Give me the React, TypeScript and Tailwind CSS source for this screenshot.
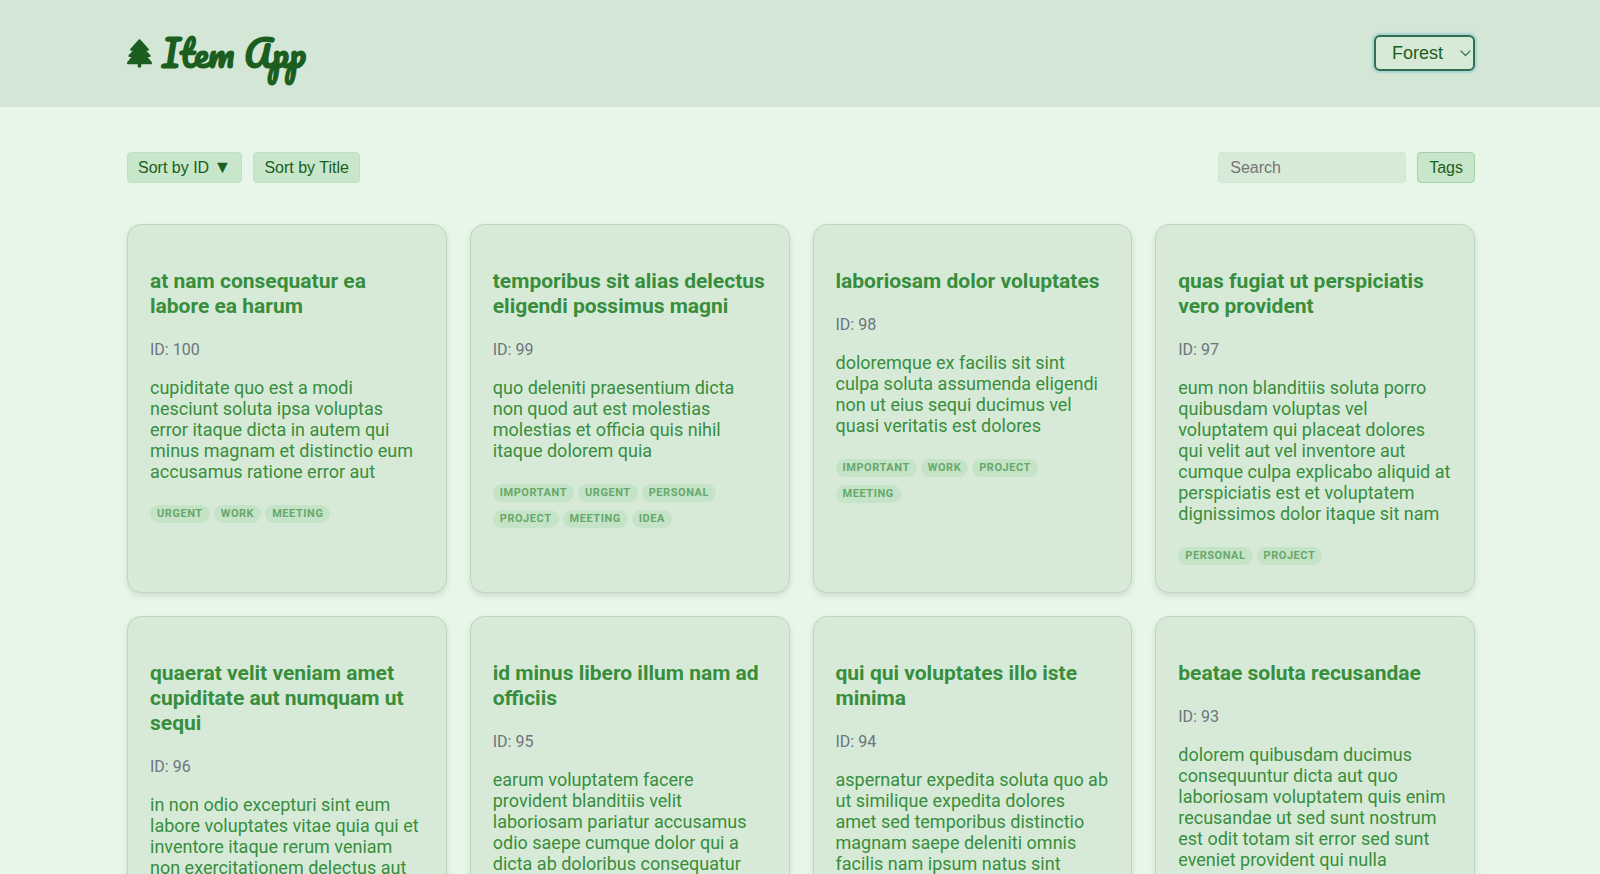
import { useState } from "react";
import { FaTree } from "react-icons/fa6";

type Item = { id: number; title: string; body: string; tags: string[] };

const ITEMS: Item[] = [
  {
    id: 100,
    title: "at nam consequatur ea labore ea harum",
    body: "cupiditate quo est a modi nesciunt soluta ipsa voluptas error itaque dicta in autem qui minus magnam et distinctio eum accusamus ratione error aut",
    tags: ["urgent", "work", "meeting"],
  },
  {
    id: 99,
    title: "temporibus sit alias delectus eligendi possimus magni",
    body: "quo deleniti praesentium dicta non quod aut est molestias molestias et officia quis nihil itaque dolorem quia",
    tags: ["important", "urgent", "personal", "project", "meeting", "idea"],
  },
  {
    id: 98,
    title: "laboriosam dolor voluptates",
    body: "doloremque ex facilis sit sint culpa soluta assumenda eligendi non ut eius sequi ducimus vel quasi veritatis est dolores",
    tags: ["important", "work", "project", "meeting"],
  },
  {
    id: 97,
    title: "quas fugiat ut perspiciatis vero provident",
    body: "eum non blanditiis soluta porro quibusdam voluptas vel voluptatem qui placeat dolores qui velit aut vel inventore aut cumque culpa explicabo aliquid at perspiciatis est et voluptatem dignissimos dolor itaque sit nam",
    tags: ["personal", "project"],
  },
  {
    id: 96,
    title: "quaerat velit veniam amet cupiditate aut numquam ut sequi",
    body: "in non odio excepturi sint eum labore voluptates vitae quia qui et inventore itaque rerum veniam non exercitationem delectus aut",
    tags: [],
  },
  {
    id: 95,
    title: "id minus libero illum nam ad officiis",
    body: "earum voluptatem facere provident blanditiis velit laboriosam pariatur accusamus odio saepe cumque dolor qui a dicta ab doloribus consequatur",
    tags: [],
  },
  {
    id: 94,
    title: "qui qui voluptates illo iste minima",
    body: "aspernatur expedita soluta quo ab ut similique expedita dolores amet sed temporibus distinctio magnam saepe deleniti omnis facilis nam ipsum natus sint",
    tags: [],
  },
  {
    id: 93,
    title: "beatae soluta recusandae",
    body: "dolorem quibusdam ducimus consequuntur dicta aut quo laboriosam voluptatem quis enim recusandae ut sed sunt nostrum est odit totam sit error sed sunt eveniet provident qui nulla",
    tags: [],
  },
];

function Card({ item }: { item: Item }) {
  return (
    <article className="rounded-[14px] border border-[#bad8bd] bg-[#d7ead8] px-[22px] pt-11 pb-[27px] shadow-[0_3px_6px_rgba(0,0,0,0.1)]">
      <h2 className="text-[21px] leading-[25px] font-bold text-[#388e3c]">{item.title}</h2>
      <p className="mt-[21px] text-base leading-[19px] text-[#6c757d]">ID: {item.id}</p>
      <p className="mt-[18px] text-lg leading-[21px] text-[#388e3c]">{item.body}</p>
      <ul className="mt-[23px] flex flex-wrap gap-y-2">
        {item.tags.map((tag) => (
          <li
            key={tag}
            className="mr-1 rounded-full bg-[#c5e3c7] px-[7px] text-[11px] leading-[18px] font-bold tracking-wider text-[#66a86a] uppercase"
          >
            {tag}
          </li>
        ))}
      </ul>
    </article>
  );
}

export default function App() {
  const [sort, setSort] = useState<"id" | "title">("id");
  const [query, setQuery] = useState("");
  const items = ITEMS.filter((i) => i.title.includes(query.toLowerCase())).sort((a, b) =>
    sort === "id" ? b.id - a.id : a.title.localeCompare(b.title),
  );
  return (
    <div className="min-h-screen bg-[#e8f5e9] font-['Roboto',sans-serif]">
      <header className="bg-[#d4e6d6] pb-px">
        <div className="mx-auto flex h-[106px] max-w-[1350px] items-center justify-between pl-0.5">
          <h1 className="flex items-center gap-2.5 text-[#1b5e20]">
            <FaTree className="h-[29px] w-[25px]" aria-hidden />
            <span className="font-['Pacifico','Lato',cursive] text-[36px] font-bold">Item App</span>
          </h1>
          <div className="relative">
            <select
              aria-label="Theme"
              className="h-9 w-[101px] appearance-none rounded-md border-2 border-[#2f6f52] bg-[#d7ead8] pl-4 font-['Liberation_Sans',sans-serif] text-lg leading-6 text-[#1b5e20] shadow-[0_0_2px_2px_#a9d2d4] outline-none"
            >
              <option>Forest</option>
              <option>Ocean</option>
            </select>
            <svg
              className="pointer-events-none absolute top-[15px] right-1 h-[7px] w-[11px] text-[#3f7a55]"
              viewBox="0 0 11 7"
              fill="none"
              stroke="currentColor"
              strokeWidth="1.3"
            >
              <path d="M1 1l4.500 4.500L10 1" strokeLinecap="round" />
            </svg>
          </div>
        </div>
      </header>
      <main className="mx-auto max-w-[1350px] pt-[45px] pb-12 pl-0.5">
        <div className="flex items-center justify-between font-['Liberation_Sans',sans-serif] text-base leading-[19px] text-[#1b5e20]">
          <div className="flex gap-[11px]">
            <button
              type="button"
              onClick={() => setSort("id")}
              className="rounded-[4px] border border-[#c2dfc4] bg-[#c8e6c9] px-2.5 py-[5px]"
            >
              Sort by ID <span className="text-lg leading-none">▼</span>
            </button>
            <button
              type="button"
              onClick={() => setSort("title")}
              className="rounded-[4px] border border-[#c2dfc4] bg-[#c8e6c9] px-2.5 py-[5px]"
            >
              Sort by Title
            </button>
          </div>
          <div className="flex gap-[11px]">
            <input
              type="search"
              aria-label="Search"
              placeholder="Search"
              value={query}
              onChange={(e) => setQuery(e.target.value)}
              className="w-[188px] rounded-[4px] border border-[#d3e6d5] bg-[#d7ead8] px-[11px] py-[5px] placeholder:text-[#757575]"
            />
            <button type="button" className="rounded-[4px] border border-[#a5d0a8] bg-[#c8e6c9] px-[11px] py-[5px]">
              Tags
            </button>
          </div>
        </div>
        <section className="mt-[41px] grid grid-cols-4 gap-[23px]">
          {items.map((item) => (
            <Card key={item.id} item={item} />
          ))}
        </section>
      </main>
    </div>
  );
}
